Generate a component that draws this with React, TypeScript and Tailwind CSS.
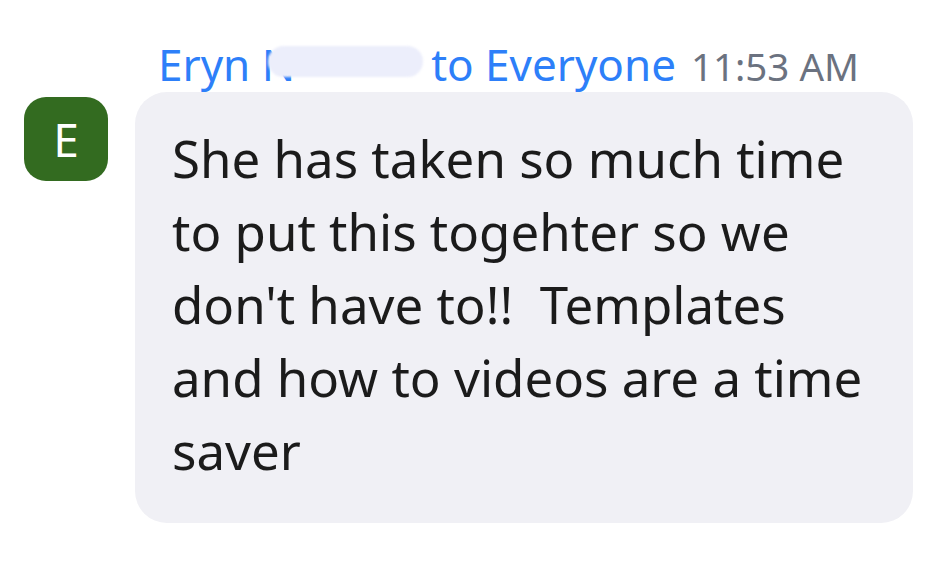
import React from "react";

export default function App() {
  return (
    <div className="w-[940px] h-[588px] bg-white relative overflow-hidden" style={{ fontFamily: '"Noto Sans", "Open Sans", sans-serif' }}>
      <div className="pt-[36px] pl-[24px] flex flex-col">
        <div className="relative flex items-baseline pl-[134px] h-[56px] text-[44px] leading-[56px] whitespace-nowrap">
          <span className="text-[#2d7ff9]">Eryn N</span>
          <span className="inline-block w-[136px]"></span>
          <span className="text-[#2d7ff9]">to Everyone</span>
          <span className="text-[#6b7280] ml-[15px] text-[38.5px]">11:53 AM</span>
          <div className="absolute left-[244px] top-[10px] w-[155px] h-[31px] rounded-full bg-[#eceefb] blur-[1px]"></div>
        </div>
        <div className="flex items-start gap-[27px]">
          <div className="mt-[5px] w-[84px] h-[84px] rounded-[22px] bg-[#336b20] flex items-center justify-center text-white text-[46px] leading-none">
            E
          </div>
          <div className="w-[778px] h-[431px] rounded-[32px] bg-[#f0f0f5] pl-[37px] pt-[30px] text-[#1b1b1b] text-[51px] leading-[73px] whitespace-nowrap">
            She has taken so much time<br />
            to put this togehter so we<br />
            don't have to!!&nbsp; Templates<br />
            and how to videos are a time<br />
            saver
          </div>
        </div>
      </div>
    </div>
  );
}
